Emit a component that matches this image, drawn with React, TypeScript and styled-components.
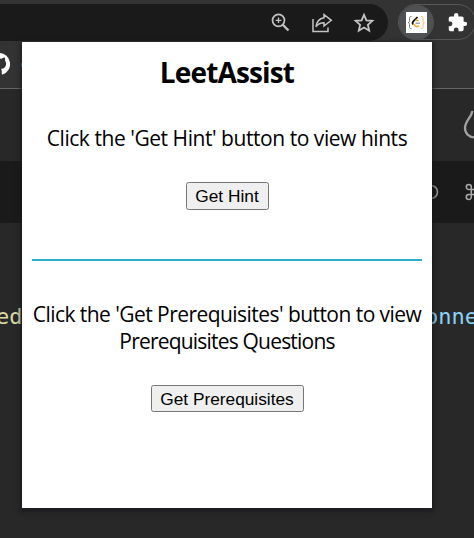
import React from "react";
import styled, { createGlobalStyle } from "styled-components";

const GlobalStyle = createGlobalStyle`
  * { box-sizing: border-box; }
  body { margin: 0; background: #282828; overflow: hidden; }
`;

const Browser = styled.div`
  position: relative;
  width: 474px;
  height: 538px;
  overflow: hidden;
  background: #282828;
`;

const Toolbar = styled.header`
  display: flex;
  height: 41px;
  padding-top: 4px;
  background: #333333;
`;

const AddressBar = styled.div`
  display: flex;
  align-items: center;
  justify-content: flex-end;
  flex: none;
  gap: 20px;
  width: 388px;
  height: 37px;
  padding-right: 13px;
  border-radius: 0 19px 19px 0;
  background: #1a1a1a;
  color: #c4c4c4;

  svg { width: 22px; height: 22px; }
`;

const Extensions = styled.div`
  display: flex;
  align-items: center;
  flex: none;
  width: 78px;
  height: 36px;
  margin-left: 10px;
  border: 1px solid #575757;
  border-radius: 18px;
`;

const ActiveExtension = styled.div`
  display: flex;
  align-items: center;
  justify-content: center;
  flex: none;
  width: 35px;
  height: 35px;
  border-radius: 50%;
  background: #4f5052;
`;

const PuzzleIcon = styled.svg`
  flex: none;
  width: 21px;
  height: 21px;
  margin-left: 13px;
`;

const Bookmarks = styled.div`
  display: flex;
  align-items: center;
  height: 48px;
  border-bottom: 1px solid #666666;
  background: #333333;
`;

const GithubIcon = styled.svg`
  width: 22px;
  height: 22px;
  margin: 0 0 2px -12px;
`;

const BookmarkEdge = styled.div`
  width: 5px;
  height: 4px;
  margin-left: 11px;
  background: #3b83b5;
`;

const SiteHeader = styled.div`
  display: flex;
  align-items: center;
  justify-content: flex-end;
  height: 72px;
`;

const EditorBar = styled.div`
  display: flex;
  align-items: center;
  justify-content: flex-end;
  gap: 26px;
  height: 62px;
  background: #1a1a1a;
`;

const CodeLine = styled.div`
  display: flex;
  justify-content: space-between;
  padding-top: 80px;
  font: 22px/28px "DejaVu Sans Mono", monospace;
`;

const Token = styled.span<{ $color: string; $left?: number; $right?: number }>`
  color: ${(p) => p.$color};
  margin-left: ${(p) => p.$left ?? 0}px;
  margin-right: ${(p) => p.$right ?? 0}px;
`;

const Popup = styled.main`
  position: absolute;
  left: 22px;
  top: 42px;
  display: flex;
  flex-direction: column;
  align-items: center;
  width: 410px;
  height: 466px;
  padding: 11px 10px 0;
  background: #ffffff;
  color: #000000;
  box-shadow: 0 2px 4px 2px rgba(20, 22, 26, 0.6);
  font-family: "Open Sans", sans-serif;
`;

const Title = styled.h1`
  margin: 0;
  font-size: 28px;
  line-height: 38px;
  font-weight: 700;
  letter-spacing: -0.85px;
`;

const Message = styled.p<{ $top: number }>`
  margin: ${(p) => p.$top}px 0 0;
  font-size: 21px;
  font-weight: 400;
  line-height: 27px;
  text-align: center;
  white-space: nowrap;
`;

const Line = styled.span<{ $spacing: number }>`
  display: block;
  letter-spacing: ${(p) => p.$spacing}px;
`;

const ActionButton = styled.button<{ $width: number; $height: number; $top: number }>`
  width: ${(p) => p.$width}px;
  height: ${(p) => p.$height}px;
  margin-top: ${(p) => p.$top}px;
  padding: 0;
  border: 1px solid #767676;
  border-radius: 2.5px;
  background: #efefef;
  color: #000000;
  font: 17.3px/20px "Liberation Sans", Arial, sans-serif;
  white-space: nowrap;
`;

const Divider = styled.hr`
  width: 390px;
  height: 2px;
  margin: 49px 0 0;
  border: 0;
  background: #2bb0cc;
`;

export default function App() {
  return (
    <Browser>
      <GlobalStyle />
      <Toolbar>
        <AddressBar>
          <svg viewBox="0 0 22 22" fill="none" stroke="currentColor">
            <circle cx="9.500" cy="8.300" r="6" strokeWidth="1.700" />
            <path d="M13.800 12.700 19.500 18.500" strokeWidth="2.300" />
            <path d="M9.500 5.500v5.600M6.700 8.300h5.600" strokeWidth="1.300" />
          </svg>
          <svg viewBox="0 0 22 22" fill="none" stroke="currentColor" strokeWidth="1.500">
            <path d="M2 7v12.500h15v-4" />
            <path d="M13 2.500 20.300 8.300l-7.300 5.700v-3.200c-3.500 0-6 1.100-8 4.100.6-5.200 3.500-8.300 8-9.100Z" />
          </svg>
          <svg viewBox="0 0 22 22" fill="none" stroke="currentColor" strokeWidth="1.8">
            <path d="m11 2.800 2.400 5.500 6 .5-4.500 4 1.300 5.900-5.200-3.100-5.200 3.100 1.300-5.900-4.500-4 6-.5Z" />
          </svg>
        </AddressBar>
        <Extensions>
          <ActiveExtension>
            <svg width="21" height="21" viewBox="0 0 21 21" fill="none">
              <path fill="#fff" d="M0 0h21v21H0z" />
              <path d="M5.500 4.500H5c-1.200 0-1.500.8-1.500 2v2c0 1.200-.5 2-1.500 2 1 0 1.500.8 1.500 2v2c0 1.200.3 2 1.500 2h.5" stroke="#777" />
              <path d="M15 4.500h.5c1.200 0 1.500.8 1.500 2v2c0 1.200.5 2 1.500 2-1 0-1.500.8-1.500 2v2c0 1.200-.3 2-1.500 2H15" stroke="#f0bc70" />
              <path d="m11.500 5-4.200 4.300c-1 1-.8 2.200 0 3" stroke="#111" strokeWidth="1.700" />
              <path d="m7.300 12 2 2c1 .9 2.500.7 3.500-.5M9.500 8.500c1-.6 2-.4 3 .5" stroke="#f5a623" strokeWidth="1.500" />
              <path d="M9.500 11.200h4.500" stroke="#999" strokeWidth="1.300" />
            </svg>
          </ActiveExtension>
          <PuzzleIcon viewBox="0 0 24 24" fill="#fff">
            <path d="M20.500 11H19V7a2 2 0 0 0-2-2h-4V3.500a2.500 2.500 0 0 0-5 0V5H4a2 2 0 0 0-2 2v3.800h1.500a2.700 2.700 0 0 1 0 5.400H2V20a2 2 0 0 0 2 2h3.800v-1.500a2.700 2.700 0 0 1 5.400 0V22H17a2 2 0 0 0 2-2v-4h1.500a2.500 2.500 0 0 0 0-5Z" />
          </PuzzleIcon>
        </Extensions>
      </Toolbar>
      <Bookmarks>
        <GithubIcon viewBox="0 0 16 16" fill="#fff">
          <path d="M8 0a8 8 0 0 0-2.530 15.590c.4.070.55-.17.55-.38v-1.490c-2.230.49-2.700-.94-2.700-.94-.36-.92-.89-1.170-.89-1.170-.73-.5.050-.49.050-.49.8.060 1.230.83 1.230.83.720 1.230 1.880.87 2.340.67.070-.52.280-.87.510-1.070-1.780-.2-3.640-.89-3.640-3.950 0-.87.310-1.590.82-2.150-.080-.2-.36-1.020.080-2.120 0 0 .67-.21 2.200.82a7.600 7.600 0 0 1 4 0c1.530-1.040 2.200-.82 2.200-.82.440 1.100.160 1.920.080 2.120.51.560.82 1.270.82 2.150 0 3.070-1.870 3.750-3.650 3.950.29.250.54.730.54 1.480v2.200c0 .21.15.46.55.38A8 8 0 0 0 8 0Z" />
        </GithubIcon>
        <BookmarkEdge />
      </Bookmarks>
      <SiteHeader>
        <svg width="11" height="32" viewBox="0 0 11 32" fill="none" stroke="#a2a2a2" strokeWidth="2.300">
          <path d="M9 2c.7 5-7 9.500-7 17 0 5.500 4 9 9 9.300" />
        </svg>
      </SiteHeader>
      <EditorBar>
        <svg width="12" height="18" viewBox="0 0 12 18" fill="none" stroke="#999" strokeWidth="1.600">
          <circle cx="4" cy="9" r="6.500" />
        </svg>
        <svg width="9" height="18" viewBox="0 0 9 18" fill="none" stroke="#aaa" strokeWidth="1.600">
          <path d="M10 6.500H3.800A2.500 2.500 0 1 1 6.300 4v10a2.500 2.500 0 1 1-2.500-2.500H10" />
        </svg>
      </EditorBar>
      <CodeLine>
        <Token $color="#dcdcaa" $left={-4}>ed</Token>
        <Token $color="#8cd2f5" $right={-4}>onne</Token>
      </CodeLine>
      <Popup>
        <Title>LeetAssist</Title>
        <Message $top={34}>
          <Line $spacing={-0.45}>Click the 'Get Hint' button to view hints</Line>
        </Message>
        <ActionButton $width={83} $height={28} $top={30}>Get Hint</ActionButton>
        <Divider />
        <Message $top={40}>
          <Line $spacing={-0.55}>Click the 'Get Prerequisites' button to view</Line>
          <Line $spacing={-0.8}>Prerequisites Questions</Line>
        </Message>
        <ActionButton $width={153} $height={27} $top={30}>Get Prerequisites</ActionButton>
      </Popup>
    </Browser>
  );
}
